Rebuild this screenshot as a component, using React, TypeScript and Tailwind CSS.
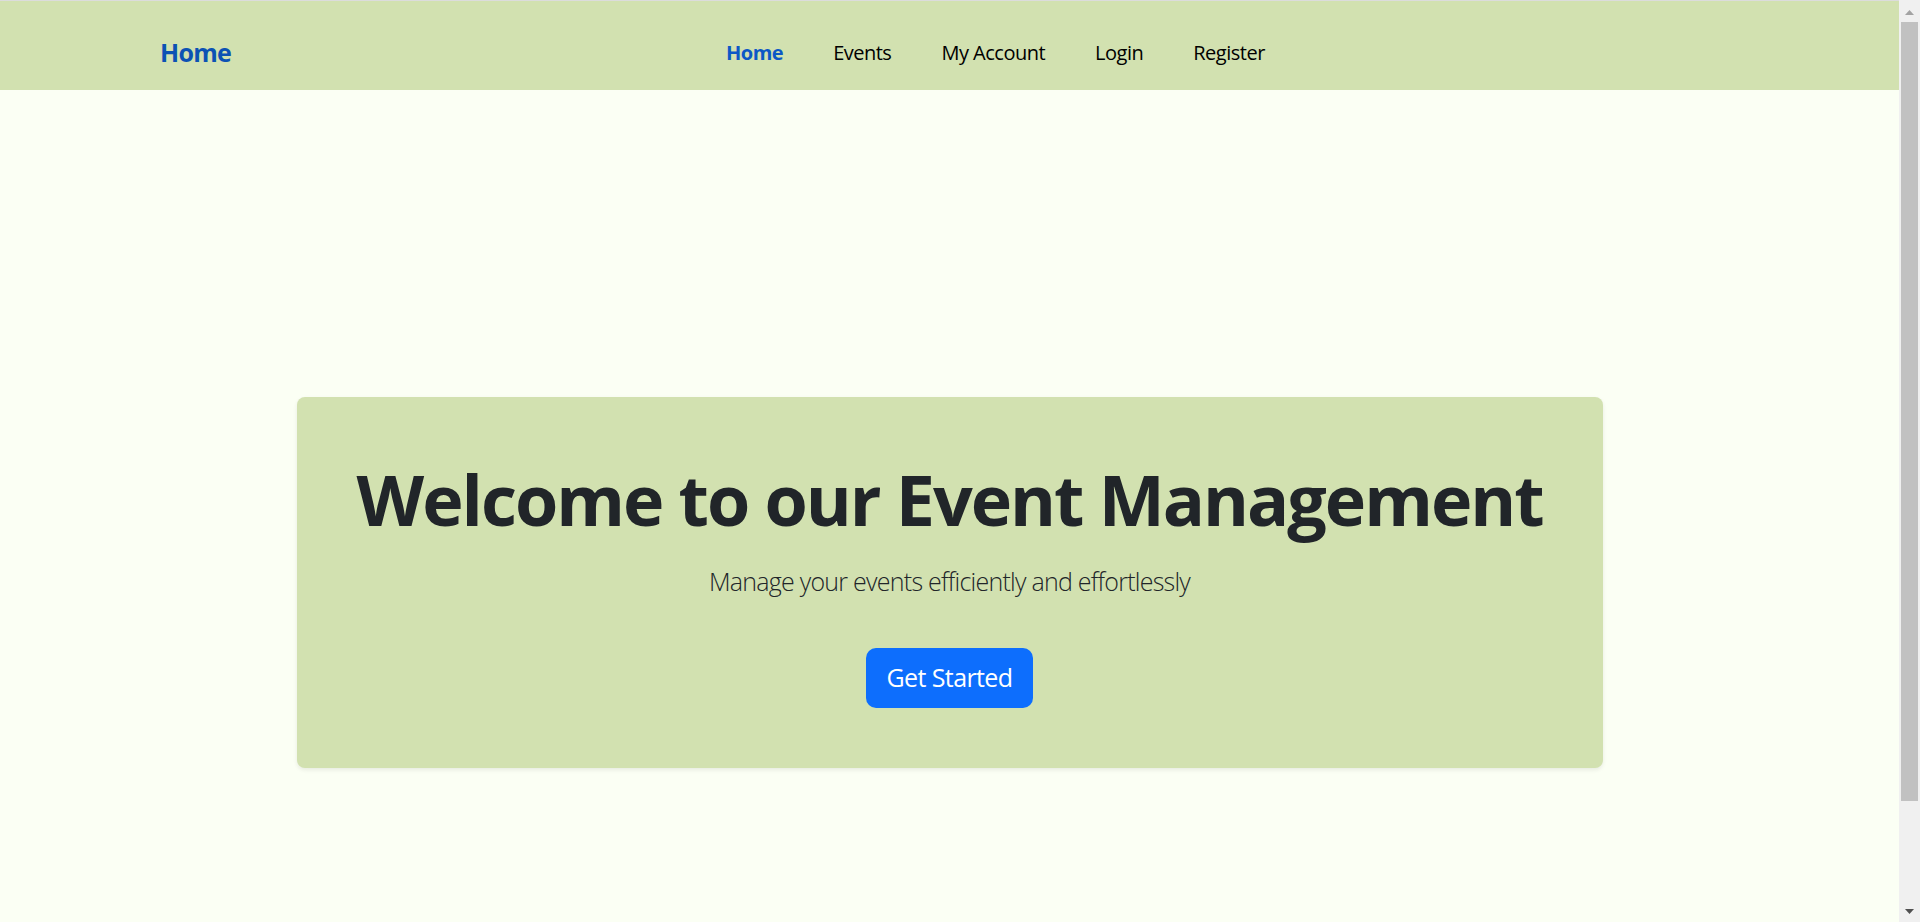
import React from "react";

const font = { fontFamily: '"Open Sans", "Noto Sans", Arial, sans-serif' };

function Scrollbar() {
  return (
    <div className="w-[21px] h-[922px] bg-[#f0f0f0] flex flex-col items-center shrink-0">
      <div className="h-[22px] w-full flex items-start justify-center pt-[10px]">
        <svg width="9" height="5" viewBox="0 0 9 5">
          <polygon points="4.5,0 9,5 0,5" fill="#a3a3a3" />
        </svg>
      </div>
      <div className="w-[17px] h-[779px] bg-[#c1c1c1]" />
      <div className="flex-1 w-full flex items-end justify-center pb-[8px]">
        <svg width="9" height="5" viewBox="0 0 9 5">
          <polygon points="0,0 9,0 4.5,5" fill="#505050" />
        </svg>
      </div>
    </div>
  );
}

export default function App() {
  const links = ["Home", "Events", "My Account", "Login", "Register"];
  return (
    <div className="w-[1920px] h-[922px] overflow-hidden flex bg-[#fbfff4]" style={font}>
      <div className="flex-1 flex flex-col">
        <nav className="h-[90px] border-t border-[#dcdcdc] bg-[#d2e1b0] flex items-center pl-[160px] pt-[14px]">
          <div className="w-[566px] text-[25px] font-bold text-[#0c52b4] leading-[37px] tracking-[-0.7px]">Home</div>
          <ul className="flex items-center gap-[50px] text-[20px] leading-[30px] tracking-[-0.5px]">
            {links.map((l, i) => (
              <li
                key={l}
                className={i === 0 ? "font-bold text-[#0c58c6]" : "text-black"}
              >
                {l}
              </li>
            ))}
          </ul>
        </nav>
        <main className="pt-[307px]">
          <section className="mx-auto w-[1306px] rounded-[8px] bg-[#d2e1b0] shadow-[0_2px_4px_rgba(0,0,0,0.08)] p-[60px] text-center">
            <h1 className="text-[70px] font-bold leading-[84px] text-[#212529] mb-[22px] whitespace-nowrap tracking-[-2px]">
              Welcome to our Event Management
            </h1>
            <p className="text-[25px] font-light leading-[37.5px] text-[#212529] mb-[47.5px] tracking-[-0.75px]">
              Manage your events efficiently and effortlessly
            </p>
            <button className="h-[60px] w-[167px] rounded-[10px] bg-[#0d6efd] text-white text-[25px] leading-[37.5px] tracking-[-0.6px]">
              Get Started
            </button>
          </section>
        </main>
      </div>
      <Scrollbar />
    </div>
  );
}
